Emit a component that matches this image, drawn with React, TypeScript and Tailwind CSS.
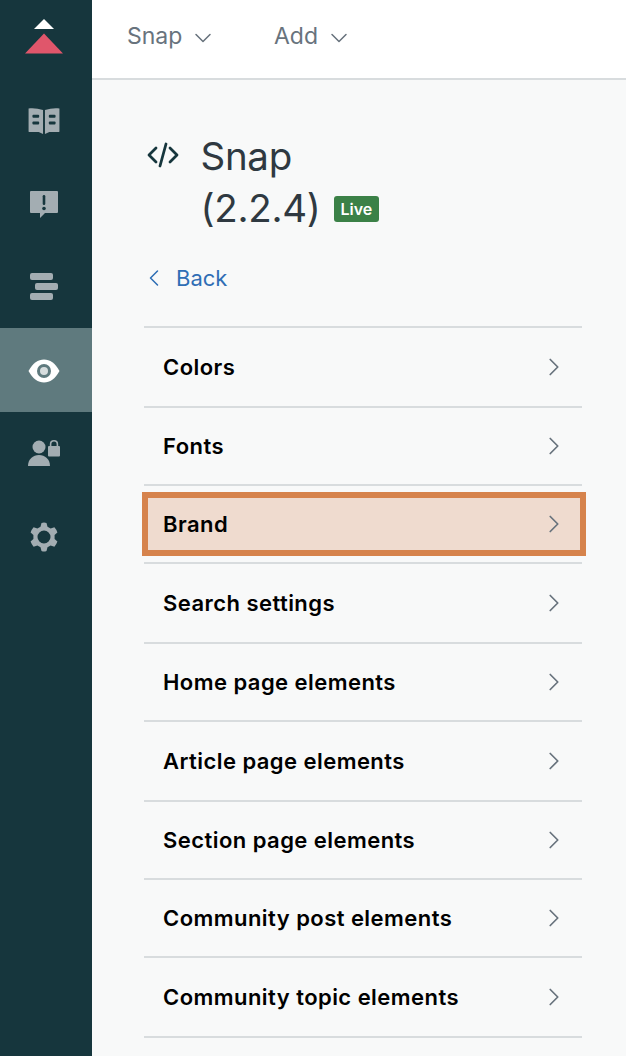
import React from 'react';
import { ChevronDown, ChevronLeft, ChevronRight } from 'lucide-react';

const rows = [
  { label: 'Colors', height: 'h-[80px]' },
  { label: 'Fonts', height: 'h-[78px]' },
  { label: 'Brand', height: 'h-[78px]', active: true },
  { label: 'Search settings', height: 'h-[80px]' },
  { label: 'Home page elements', height: 'h-[78px]' },
  { label: 'Article page elements', height: 'h-[80px]' },
  { label: 'Section page elements', height: 'h-[78px]' },
  { label: 'Community post elements', height: 'h-[78px]' },
  { label: 'Community topic elements', height: 'h-[80px]' },
];

const BookIcon = () => (
  <svg width="32" height="27" viewBox="0 0 32 28" fill="#a3adb2">
    <path d="M0 0.5 C5 0 10 0.5 15 2 V27 L10.5 25 H1 Q0 25 0 24 Z" />
    <path d="M32 0.5 C27 0 22 0.5 17 2 V27 L21.5 25 H31 Q32 25 32 24 Z" />
    <rect x="4" y="7" width="7" height="3" rx="1" fill="#16363d" />
    <rect x="4" y="14" width="7" height="3" rx="1" fill="#16363d" />
    <rect x="21" y="7" width="7" height="3" rx="1" fill="#16363d" />
    <rect x="21" y="14" width="7" height="3" rx="1" fill="#16363d" />
  </svg>
);

const AlertIcon = () => (
  <svg width="28" height="27" viewBox="0 0 28 27" fill="#a3adb2">
    <path d="M1 0 H27 Q28 0 28 1 V21 Q28 22 27 22 H15 L10 27 V22 H1 Q0 22 0 21 V1 Q0 0 1 0 Z" />
    <rect x="12.7" y="4" width="2.6" height="10" rx="1.3" fill="#16363d" />
    <circle cx="14" cy="17.5" r="1.8" fill="#16363d" />
  </svg>
);

const BarsIcon = () => (
  <div className="flex flex-col gap-[3px] w-[28px]">
    <div className="h-[7px] w-[23px] rounded-[2px] bg-[#a3adb2]" />
    <div className="h-[7px] w-[23px] ml-[5px] rounded-[2px] bg-[#a3adb2]" />
    <div className="h-[7px] w-[23px] rounded-[2px] bg-[#a3adb2]" />
  </div>
);

const EyeIcon = () => (
  <svg width="32" height="24" viewBox="0 0 32 24">
    <path d="M0.5 12 C5 4 10 0.5 16 0.5 C22 0.5 27 4 31.5 12 C27 20 22 23.5 16 23.5 C10 23.5 5 20 0.5 12 Z" fill="#ffffff" />
    <circle cx="16" cy="12" r="7" fill="#5f7a7e" />
    <circle cx="16" cy="12" r="4" fill="#ffffff" fillOpacity="0.75" />
  </svg>
);

const UserLockIcon = () => (
  <svg width="32" height="27" viewBox="0 0 32 27" fill="#a3adb2">
    <circle cx="11" cy="7" r="6.5" />
    <path d="M0 26 C0 19 5 15 11 15 C17 15 22 19 22 26 Z" />
    <rect x="20" y="6" width="12" height="10.5" rx="1" />
    <path d="M22.6 7 V4.2 C22.6 2 24.2 0.8 26 0.8 C27.8 0.8 29.4 2 29.4 4.2 V7" fill="none" stroke="#a3adb2" strokeWidth="1.6" />
  </svg>
);

const GearIcon = () => (
  <svg width="28" height="30" viewBox="0 0 28 30" fill="#a3adb2">
    <path
      fillRule="evenodd"
      d="M11.5 1 Q14 0 16.5 1 L17.5 4.8 L20.6 6.4 L24.4 5.2 Q26.4 7.4 27.4 10.4 L24.6 13 V17 L27.4 19.6 Q26.4 22.6 24.4 24.8 L20.6 23.6 L17.5 25.2 L16.5 29 Q14 30 11.5 29 L10.5 25.2 L7.4 23.6 L3.6 24.8 Q1.6 22.6 0.6 19.6 L3.4 17 V13 L0.6 10.4 Q1.6 7.4 3.6 5.2 L7.4 6.4 L10.5 4.8 Z M14 8.5 A6.5 6.5 0 1 0 14 21.5 A6.5 6.5 0 1 0 14 8.5 Z"
    />
  </svg>
);

const Sidebar = () => (
  <aside className="w-[92px] shrink-0 bg-[#16363d] flex flex-col">
    <div className="h-[76px] flex flex-col items-center pt-[19px] pr-[4px]">
      <svg width="40" height="35" viewBox="0 0 40 35">
        <path d="M20 0 L30 10 H10 Z" fill="#ffffff" />
        <path d="M20 14.5 L39 34.5 H1 Z" fill="#e0566b" />
      </svg>
    </div>
    <div className="h-[84px] flex items-center justify-center pt-[6px] pr-[4px]"><BookIcon /></div>
    <div className="h-[84px] flex items-center justify-center pt-[5px] pr-[4px]"><AlertIcon /></div>
    <div className="h-[84px] flex items-center justify-center pr-[4px]"><BarsIcon /></div>
    <div className="h-[84px] flex items-center justify-center bg-[#5f7a7e] pt-[1px] pr-[4px]"><EyeIcon /></div>
    <div className="h-[84px] flex items-center justify-center pb-[2px] pr-[4px]"><UserLockIcon /></div>
    <div className="h-[84px] flex items-center justify-center pb-[2px] pr-[4px]"><GearIcon /></div>
  </aside>
);

const App = () => {
  return (
    <div className="flex h-[1056px] w-[626px] overflow-hidden bg-[#f8f9f9] font-['Inter',sans-serif]">
      <Sidebar />
      <main className="flex-1 min-w-0">
        <header className="h-[80px] bg-white border-b-2 border-[#d8dcde] flex items-center pl-[35px] pb-[5px] text-[23px] text-[#68737d]">
          <span className="w-[54px]">Snap</span>
          <ChevronDown className="ml-[8px] mt-[2px] w-[28px] h-[28px]" strokeWidth={1.3} />
          <span className="ml-[57px] w-[44px]">Add</span>
          <ChevronDown className="ml-[7px] mt-[2px] w-[28px] h-[28px]" strokeWidth={1.3} />
        </header>

        <div className="pl-[52px] pr-[44px]">
          <div className="flex pt-[50px]">
            <svg className="ml-[3px] mt-[11px]" width="32" height="28" viewBox="0 0 32 28" fill="none" stroke="#16363d" strokeWidth="2.8" strokeLinecap="round" strokeLinejoin="round">
              <path d="M9 7 L2 14 L9 21" />
              <path d="M23 7 L30 14 L23 21" />
              <path d="M19 3 L13 25" />
            </svg>
            <div className="ml-[21.5px] text-[38.5px] tracking-[-0.3px] leading-[52px] text-[#2f3941]">
              <div>Snap</div>
              <div className="flex items-center">
                <span>(2.2.4)</span>
                <span className="ml-[13px] mt-[2px] h-[26px] px-[7px] rounded-[3px] bg-[#3b8147] text-white text-[16px] tracking-normal font-semibold leading-[26px]">Live</span>
              </div>
            </div>
          </div>

          <div className="flex items-center h-[44px] mt-[22px] text-[22px] text-[#2f6eb5]">
            <ChevronLeft className="-ml-[4px] w-[28px] h-[28px] mr-[8px]" strokeWidth={1.3} />
            <span>Back</span>
          </div>

          <ul className="mt-[26px] border-t-2 border-[#d8dcde]">
            {rows.map((row) => (
              <li key={row.label} className={`${row.height} border-b-2 border-[#d8dcde]`}>
                {row.active ? (
                  <div className="h-full pt-[6px]">
                    <div className="-ml-[2px] -mr-[4px] h-[64px] border-[6px] border-[#d6834c] bg-[#efdbcf] flex items-center justify-between pl-[15px] pr-[11px]">
                      <span className="text-[22px] tracking-[0.45px] font-semibold text-black">{row.label}</span>
                      <ChevronRight className="w-[30px] h-[30px] text-[#68737d]" strokeWidth={1.4} />
                    </div>
                  </div>
                ) : (
                  <div className="h-full flex items-center justify-between pl-[19px] pr-[13px]">
                    <span className="text-[22px] tracking-[0.45px] font-semibold text-black">{row.label}</span>
                    <ChevronRight className="w-[30px] h-[30px] text-[#68737d]" strokeWidth={1.4} />
                  </div>
                )}
              </li>
            ))}
          </ul>
        </div>
      </main>
    </div>
  );
};

export default App;
